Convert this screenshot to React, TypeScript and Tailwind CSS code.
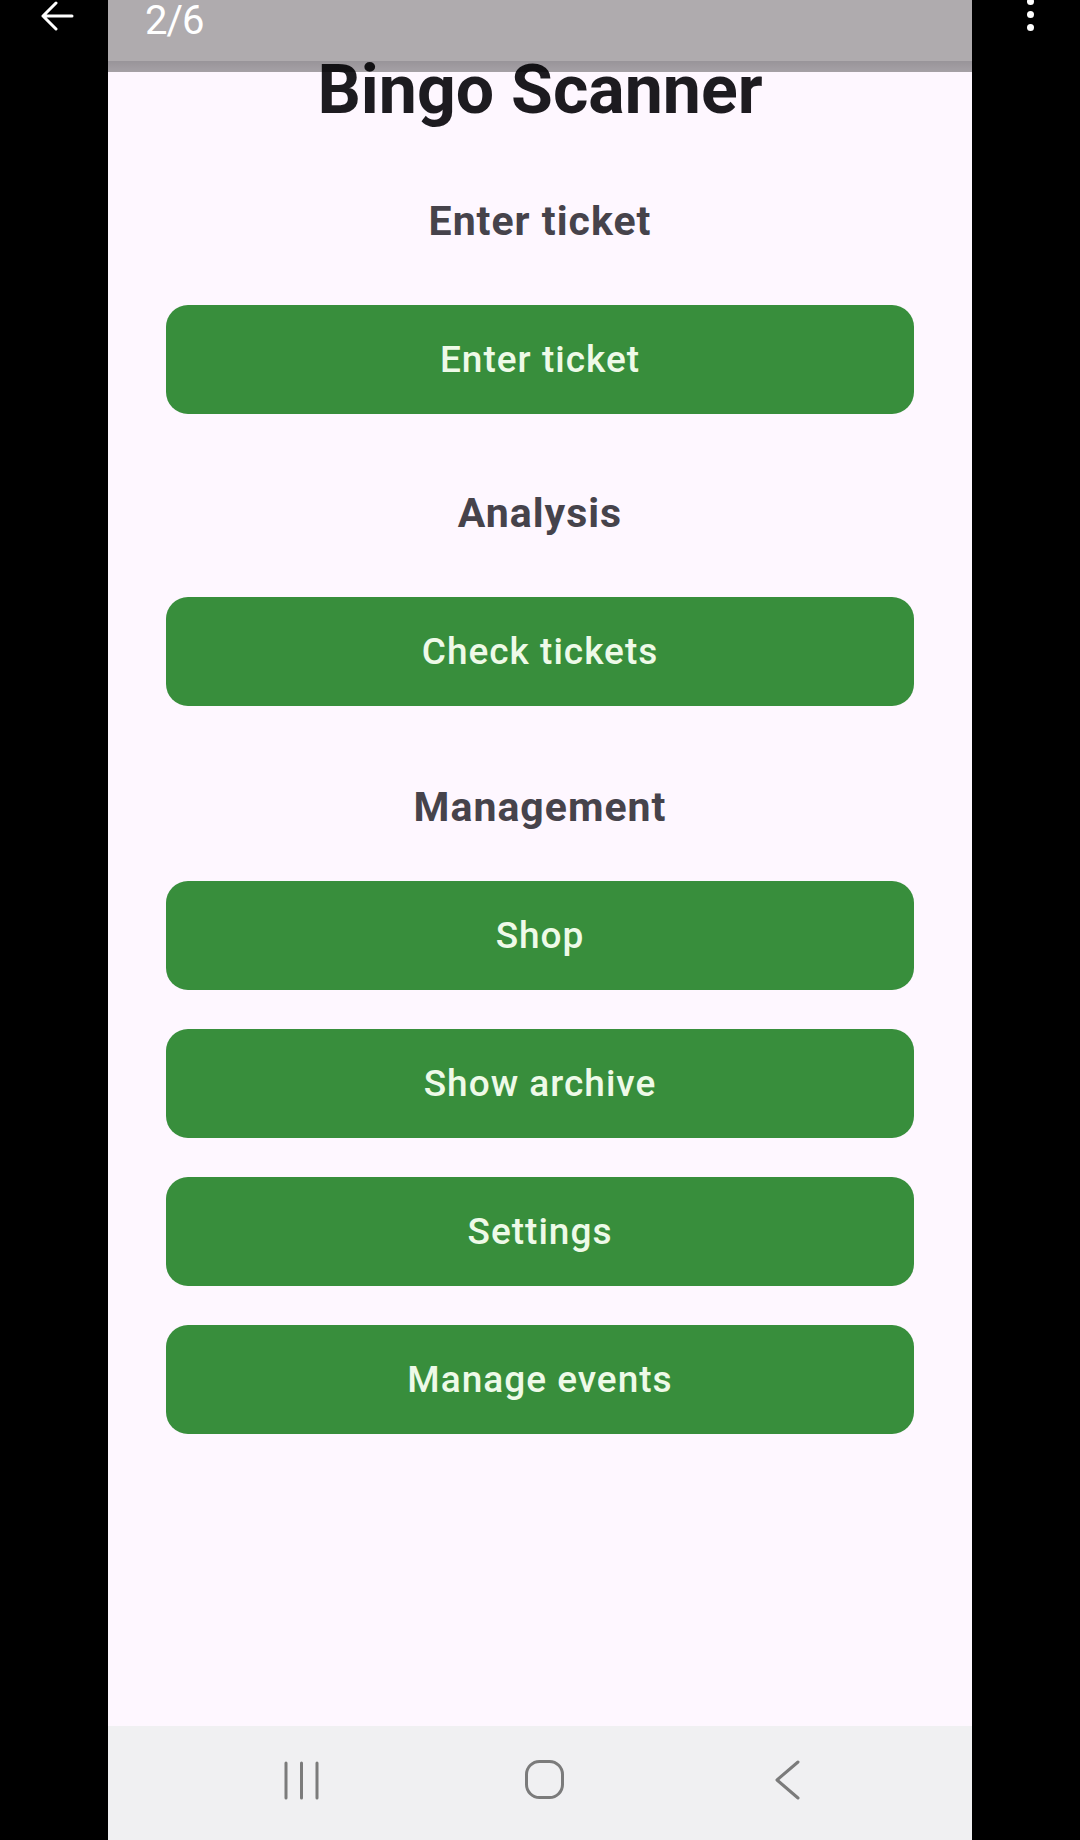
const sections = [
  { title: "Enter ticket", gap: "mt-[67px]", buttons: ["Enter ticket"] },
  { title: "Analysis", gap: "mt-[75px]", buttons: ["Check tickets"] },
  { title: "Management", gap: "mt-[77px]", buttons: ["Shop", "Show archive", "Settings", "Manage events"] },
];

function MenuButton({ label, first, tight }: { label: string; first: boolean; tight: boolean }) {
  const spacing = first ? (tight ? "mt-[50px]" : "mt-[60px]") : "mt-[39px]";
  return (
    <button
      className={`${spacing} flex h-[109px] w-full items-center justify-center rounded-[22px] bg-[#388e3c] text-[37px] font-medium tracking-[1px] text-[#eefae8]`}
    >
      {label}
    </button>
  );
}

function NavBar() {
  return (
    <nav className="flex h-[114px] shrink-0 items-start gap-[202px] bg-[#f0f0f2] pl-[174px] pt-[34px]">
      <svg width="40" height="40" viewBox="0 0 40 40" fill="none" stroke="#7b7b7b" strokeWidth="3" strokeLinecap="round">
        <path d="M4 3v35M19.5 3v35M35 3v35" />
      </svg>
      <svg width="40" height="40" viewBox="0 0 40 40" fill="none" stroke="#7b7b7b" strokeWidth="3">
        <rect x="2.5" y="1.5" width="36" height="36" rx="13" />
      </svg>
      <svg width="40" height="40" viewBox="0 0 40 40" fill="none" stroke="#7b7b7b" strokeWidth="3" strokeLinecap="round" strokeLinejoin="round">
        <path d="M32 2L11 20l21 18" />
      </svg>
    </nav>
  );
}

export default function App() {
  return (
    <div className="flex h-[1840px] w-[1080px] bg-black font-['Roboto',sans-serif]">
      {/* left gutter with the viewer's back arrow */}
      <div className="w-[108px] shrink-0 pl-[40px] pt-[1px]">
        <svg width="34" height="32" viewBox="0 0 34 32" fill="none" stroke="white" strokeWidth="3" strokeLinecap="round" strokeLinejoin="round">
          <path d="M32 15H3M16 2L3 15l13 13" />
        </svg>
      </div>

      <div className="relative flex w-[864px] shrink-0 flex-col bg-[#fef7ff]">
        <main className="flex flex-1 flex-col items-center px-[58px] pt-[50px]">
          <h1 className="text-[68px] font-bold leading-[80px] text-[#1d1b20]">Bingo Scanner</h1>
          {sections.map((s) => (
            <section key={s.title} className="flex w-full flex-col items-center">
              <h2 className={`${s.gap} text-[41px] font-bold leading-[48px] tracking-[1px] text-[#46434b]`}>{s.title}</h2>
              {s.buttons.map((b, i) => (
                <MenuButton key={b} label={b} first={i === 0} tight={s.title === "Management"} />
              ))}
            </section>
          ))}
        </main>
        <NavBar />

        {/* gallery viewer overlay bar */}
        <div className="absolute inset-x-0 top-0">
          <div className="relative h-[61px] bg-[#afabae]">
            <span className="absolute left-[37px] top-[1px] text-[40px] leading-[40px] tracking-[-1px] text-white">2/6</span>
          </div>
          <div className="h-[11px] bg-gradient-to-b from-black/40 to-black/35" />
        </div>
      </div>

      {/* right gutter with the overflow dots */}
      <div className="flex w-[108px] shrink-0 flex-col gap-[6px] pl-[55px]">
        <span className="-mt-[2px] h-[7px] w-[7px] rounded-full bg-white" />
        <span className="h-[7px] w-[7px] rounded-full bg-white" />
        <span className="h-[7px] w-[7px] rounded-full bg-white" />
      </div>
    </div>
  );
}
